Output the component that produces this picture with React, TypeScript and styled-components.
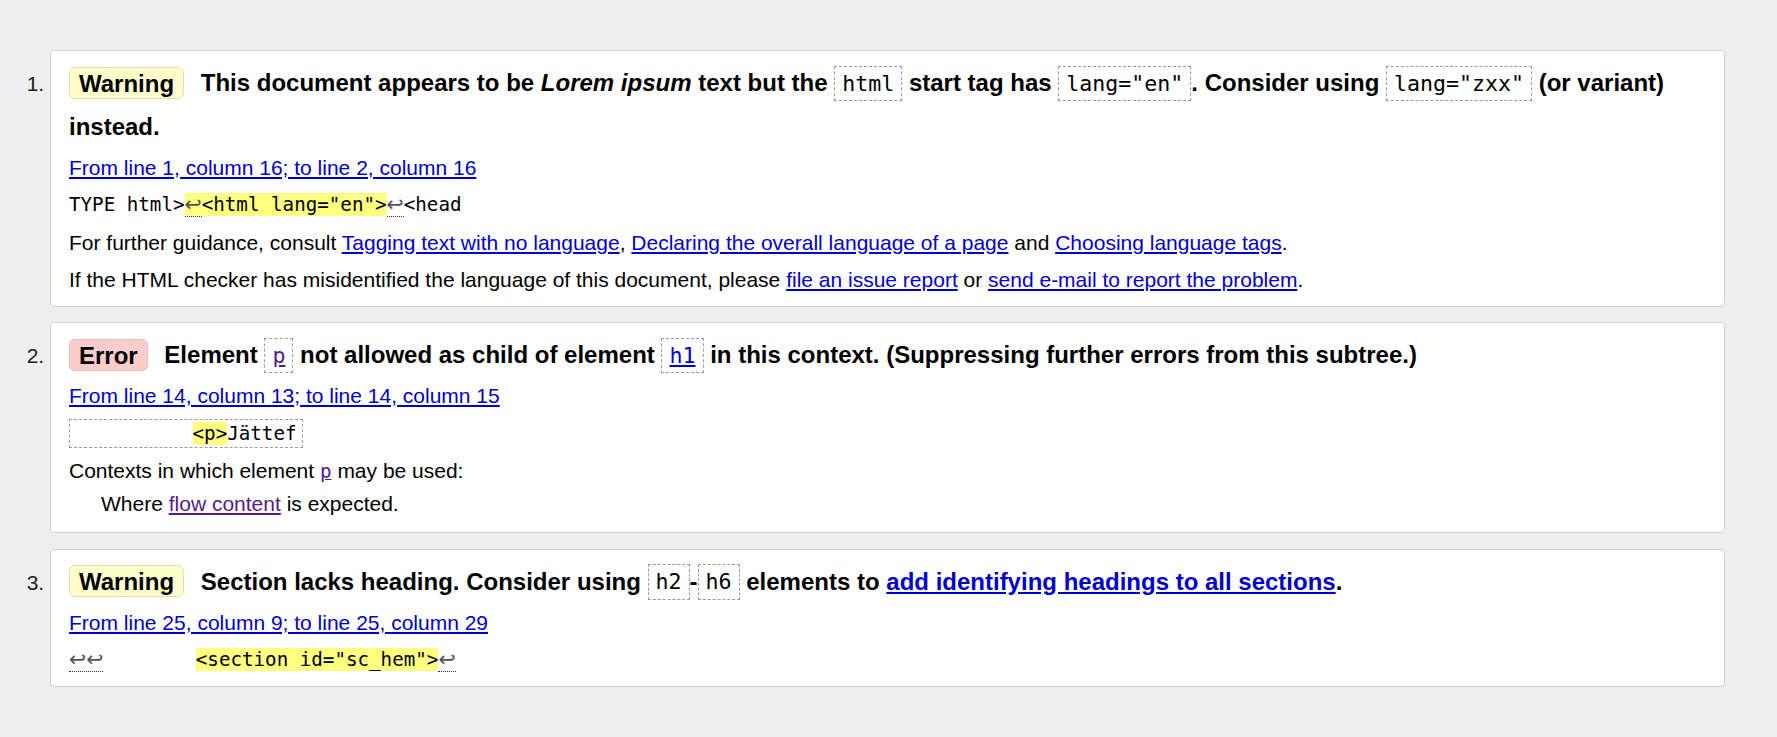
import React from "react";
import styled, { createGlobalStyle } from "styled-components";

const GlobalStyle = createGlobalStyle`
  html, body { margin: 0; padding: 0; background: #eeeeee; }
  body { font-family: "Liberation Sans", Arial, sans-serif; color: #000; }
`;

const Messages = styled.ol`
  list-style: decimal outside;
  margin: 0;
  padding: 50px 52px 32px 50px;
`;

const Message = styled.li`
  background: #ffffff;
  border: 1px solid #cfcfcf;
  border-radius: 4px;
  padding: 10px 18px;
  margin: 0 0 15.5px;
  font-size: 21px;
  line-height: 31.5px;
  &::marker {
    color: #222;
    font-size: 21px;
  }
`;

const Title = styled.p`
  margin: 0;
  font-size: 24px;
  line-height: 43.5px;
  font-weight: bold;
`;

type Kind = "warning" | "error";

const Badge = styled.strong<{ $kind: Kind }>`
  padding: 1.5px 9px;
  margin-right: 10px;
  border: 1px solid ${(p) => (p.$kind === "error" ? "#f0bcbc" : "#e3dfa8")};
  background: ${(p) => (p.$kind === "error" ? "#fbcccc" : "#ffffcc")};
  border-radius: 6px;
`;

const Code = styled.code`
  font-family: "DejaVu Sans Mono", monospace;
  font-size: 21.6px;
  font-weight: normal;
  line-height: 1;
  padding: 4.2px 7px;
  border: 1px dashed #9a9a9a;
  background: #ffffff;
`;

const Link = styled.a<{ $visited?: boolean }>`
  color: ${(p) => (p.$visited ? "#551a8b" : "#0000cc")};
  text-decoration: underline;
`;

const Para = styled.p`
  margin: 6px 0 0;
`;

const Location = styled(Para)`
  margin-top: 3.5px;
`;

const Extract = styled.p<{ $boxed?: boolean }>`
  margin: 6px 0 ${(p) => (p.$boxed ? "2px" : "0")};
  font-family: "DejaVu Sans Mono", monospace;
  font-size: 19.2px;
  white-space: pre;
`;

const ExtractBox = styled.code`
  display: inline-block;
  font-family: inherit;
  line-height: 27px;
  padding: 0 5px 0 7px;
  border: 1px dashed #9a9a9a;
`;

const Mark = styled.mark`
  background: #ffff80;
  color: inherit;
`;

const LineBreak = styled.span`
  font-family: "DejaVu Sans", sans-serif;
  font-size: 20.5px;
  color: #555;
  border-bottom: 1px dotted #333;
`;

const InlineCode = styled.code`
  font-family: "DejaVu Sans Mono", monospace;
  font-size: 19.2px;
`;

const Contexts = styled.dl`
  margin: 6px 0 3px;
`;

const ContextTerm = styled.dt``;

const ContextDef = styled.dd`
  margin: 0 0 0 32px;
`;

export default function App() {
  return (
    <>
      <GlobalStyle />
      <Messages>
        <Message>
          <Title>
            <Badge $kind="warning">Warning</Badge> This document appears to be{" "}
            <em>Lorem ipsum</em> text but the <Code>html</Code> start tag has{" "}
            <Code>lang="en"</Code>. Consider using <Code>lang="zxx"</Code> (or
            variant) instead.
          </Title>
          <Location>
            <Link href="#">From line 1, column 16; to line 2, column 16</Link>
          </Location>
          <Extract>
            {"TYPE html>"}
            <Mark>
              <LineBreak>↩</LineBreak>
              {'<html lang="en">'}
            </Mark>
            <LineBreak>↩</LineBreak>
            {"<head"}
          </Extract>
          <Para>
            For further guidance, consult{" "}
            <Link href="#">Tagging text with no language</Link>,{" "}
            <Link href="#">Declaring the overall language of a page</Link> and{" "}
            <Link href="#">Choosing language tags</Link>.
          </Para>
          <Para>
            If the HTML checker has misidentified the language of this document,
            please <Link href="#">file an issue report</Link> or{" "}
            <Link href="#">send e-mail to report the problem</Link>.
          </Para>
        </Message>

        <Message>
          <Title>
            <Badge $kind="error">Error</Badge> Element{" "}
            <Code>
              <Link href="#" $visited>
                p
              </Link>
            </Code>{" "}
            not allowed as child of element{" "}
            <Code>
              <Link href="#">h1</Link>
            </Code>{" "}
            in this context. (Suppressing further errors from this subtree.)
          </Title>
          <Location>
            <Link href="#">From line 14, column 13; to line 14, column 15</Link>
          </Location>
          <Extract $boxed>
            <ExtractBox>
              {"          "}
              <Mark>{"<p>"}</Mark>
              {"Jättef"}
            </ExtractBox>
          </Extract>
          <Contexts>
            <ContextTerm>
              Contexts in which element{" "}
              <InlineCode>
                <Link href="#" $visited>
                  p
                </Link>
              </InlineCode>{" "}
              may be used:
            </ContextTerm>
            <ContextDef>
              Where{" "}
              <Link href="#" $visited>
                flow content
              </Link>{" "}
              is expected.
            </ContextDef>
          </Contexts>
        </Message>

        <Message>
          <Title>
            <Badge $kind="warning">Warning</Badge> Section lacks heading.
            Consider using <Code>h2</Code>-<Code>h6</Code> elements to{" "}
            <Link href="#">add identifying headings to all sections</Link>.
          </Title>
          <Location>
            <Link href="#">From line 25, column 9; to line 25, column 29</Link>
          </Location>
          <Extract>
            <LineBreak>↩↩</LineBreak>
            {"        "}
            <Mark>{'<section id="sc_hem">'}</Mark>
            <LineBreak>↩</LineBreak>
          </Extract>
        </Message>
      </Messages>
    </>
  );
}
